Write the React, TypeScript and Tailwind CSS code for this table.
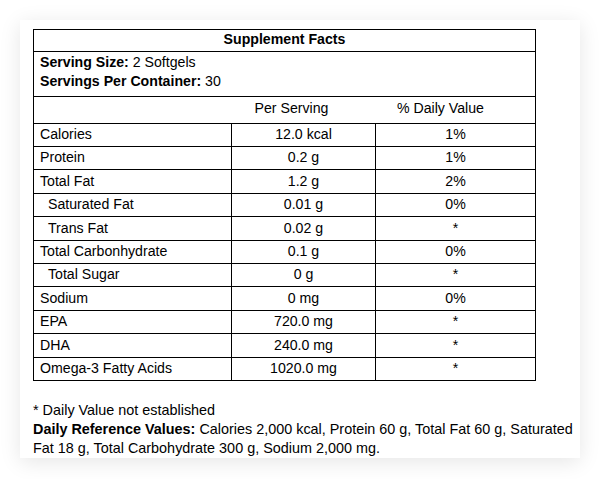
import React from "react";

type Row = {
  name: string;
  amount: string;
  dv: string;
  sub?: boolean;
};

const rows: Row[] = [
  { name: "Calories", amount: "12.0 kcal", dv: "1%" },
  { name: "Protein", amount: "0.2 g", dv: "1%" },
  { name: "Total Fat", amount: "1.2 g", dv: "2%" },
  { name: "Saturated Fat", amount: "0.01 g", dv: "0%", sub: true },
  { name: "Trans Fat", amount: "0.02 g", dv: "*", sub: true },
  { name: "Total Carbonhydrate", amount: "0.1 g", dv: "0%" },
  { name: "Total Sugar", amount: "0 g", dv: "*", sub: true },
  { name: "Sodium", amount: "0 mg", dv: "0%" },
  { name: "EPA", amount: "720.0 mg", dv: "*" },
  { name: "DHA", amount: "240.0 mg", dv: "*" },
  { name: "Omega-3 Fatty Acids", amount: "1020.0 mg", dv: "*" },
];

export default function App() {
  return (
    <div
      className="min-h-screen bg-white p-[20px] text-[14.15px] text-black"
      style={{ fontFamily: '"Liberation Sans", Arial, Helvetica, sans-serif' }}
    >
      <div className="w-[560px] bg-white pt-[9px] pl-[13px] pr-[4px] shadow-[0_4px_20px_rgba(0,0,0,0.1)]">
        {/* facts table */}
        <div className="w-[503px] border-x border-t border-black">
          <div className="h-[22px] border-b border-black pt-[1px] text-center font-bold leading-[17px]">
            Supplement Facts
          </div>

          <div className="h-[45px] border-b border-black pl-[6px] pt-[0.5px] leading-[19.3px]">
            <div>
              <span className="font-bold">Serving Size:</span> 2 Softgels
            </div>
            <div>
              <span className="font-bold">Servings Per Container:</span> 30
            </div>
          </div>

          {/* column heads */}
          <div className="grid h-[26.6px] grid-cols-[203px_109px_1fr] border-b border-black pt-[2.5px] leading-[17px]">
            <div></div>
            <div className="text-center">Per Serving</div>
            <div className="text-center">% Daily Value</div>
          </div>

          {rows.map((row) => (
            <div
              key={row.name}
              className="grid h-[23.4px] grid-cols-[198px_144px_1fr] border-b border-black leading-[17px]"
            >
              <div
                className={
                  row.sub
                    ? "border-r border-black pl-[14px] pt-[2.5px]"
                    : "border-r border-black pl-[6px] pt-[2.5px]"
                }
              >
                {row.name}
              </div>
              <div className="border-r border-black pt-[2.5px] text-center">
                {row.amount}
              </div>
              <div className="pt-[2.5px] text-center">{row.dv}</div>
            </div>
          ))}
        </div>

        {/* footnotes */}
        <div className="mt-[20px] text-[14.4px] leading-[19px]">
          <p>* Daily Value not established</p>
          <p>
            <span className="font-bold">Daily Reference Values:</span> Calories
            2,000 kcal, Protein 60 g, Total Fat 60 g, Saturated Fat 18 g, Total
            Carbohydrate 300 g, Sodium 2,000 mg.
          </p>
        </div>
      </div>
    </div>
  );
}
